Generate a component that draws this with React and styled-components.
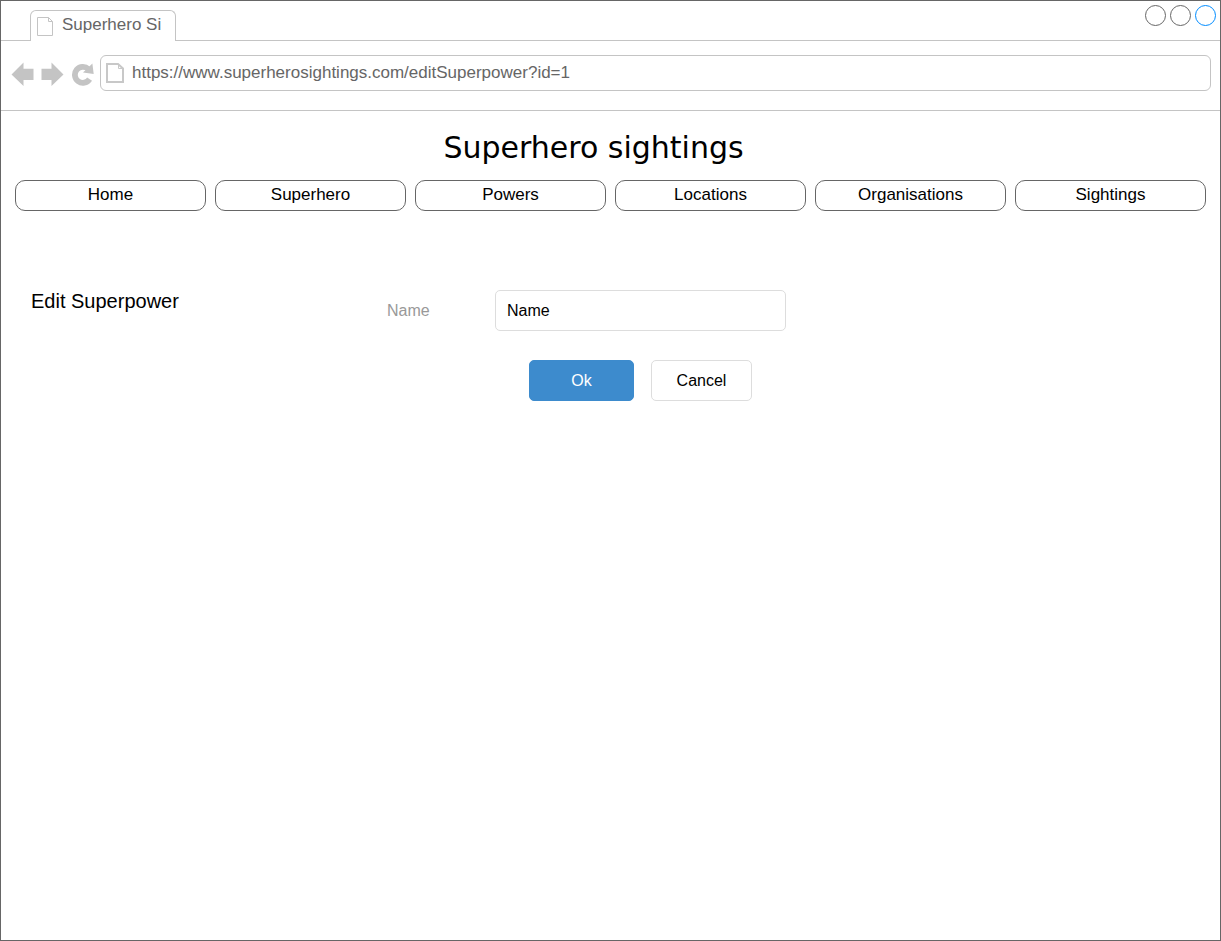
import React from "react";
import styled, { createGlobalStyle } from "styled-components";

const GlobalStyle = createGlobalStyle`
  *, *::before, *::after { box-sizing: border-box; }
  body {
    margin: 0;
    background: #fff;
    color: #000;
    font-family: "Liberation Sans", Arial, sans-serif;
    font-size: 16px;
  }
`;

const Window = styled.div`
  display: flex;
  flex-direction: column;
  min-height: 100vh;
  border: 1px solid #666;
  background: #fff;
`;

const TabStrip = styled.div`
  display: flex;
  justify-content: space-between;
  height: 40px;
  padding: 0 4px 0 29px;
  border-bottom: 1px solid #c4c4c4;
`;

const Tab = styled.div`
  display: flex;
  gap: 9px;
  width: 146px;
  height: 31px;
  margin-top: 9px;
  padding: 5px 6px 0;
  border: 1px solid #c4c4c4;
  border-bottom: 0;
  border-radius: 6px 6px 0 0;
  background: #fff;
  color: #666;
  font-size: 17px;
  line-height: 18px;
  white-space: nowrap;

  svg { margin-top: 1px; }
`;

const WindowControls = styled.div`
  display: flex;
  gap: 4px;
  padding-top: 4px;
`;

const Circle = styled.button`
  width: 21px;
  height: 21px;
  padding: 0;
  border: 1px solid ${(p) => (p.$accent ? "#008cff" : "#666")};
  border-radius: 50%;
  background: #fff;
`;

const Toolbar = styled.div`
  display: flex;
  align-items: flex-start;
  height: 70px;
  padding: 14px 9px 0 10px;
  border-bottom: 1px solid #c4c4c4;
`;

const IconButton = styled.button`
  display: flex;
  align-items: center;
  width: 24px;
  height: 38px;
  margin-right: 6px;
  padding: 0;
  border: 0;
  background: none;

  &:last-of-type { margin-right: 5px; }
`;

const AddressBar = styled.label`
  display: flex;
  flex: 1;
  gap: 8px;
  align-items: center;
  height: 36px;
  padding: 0 5px;
  border: 1px solid #c4c4c4;
  border-radius: 6px;
`;

const AddressInput = styled.input`
  flex: 1;
  min-width: 0;
  height: 20px;
  padding: 0;
  border: 0;
  outline: 0;
  background: none;
  color: #666;
  font-family: inherit;
  font-size: 17px;
`;

const Title = styled.h1`
  margin: 0;
  padding: 19px 34px 0 0;
  font-family: "DejaVu Sans", Verdana, sans-serif;
  font-size: 30px;
  font-weight: 400;
  line-height: 36px;
  text-align: center;
`;

const Nav = styled.nav`
  display: grid;
  grid-template-columns: repeat(6, 1fr);
  gap: 9px;
  padding: 14px 14px 0;
`;

const NavLink = styled.a`
  height: 31px;
  border: 1px solid #666;
  border-radius: 10px;
  color: #000;
  font-size: 17px;
  line-height: 28px;
  text-align: center;
  text-decoration: none;
`;

const Content = styled.main`
  display: flex;
  align-items: flex-start;
  padding: 79px 30px 0;
`;

const Heading = styled.h2`
  width: 356px;
  margin: 0;
  font-size: 20px;
  font-weight: 400;
  line-height: 22px;
`;

const Form = styled.form`
  display: grid;
  grid-template-columns: 108px 291px;
  row-gap: 29px;
  align-items: center;
`;

const Label = styled.label`
  color: #999;
`;

const TextInput = styled.input`
  width: 100%;
  height: 41px;
  padding: 0 11px;
  border: 1px solid #ddd;
  border-radius: 5px;
  background: #fff;
  color: #000;
  font-family: inherit;
  font-size: 16px;
`;

const Actions = styled.div`
  display: flex;
  grid-column: 2;
  gap: 17px;
  justify-content: center;
`;

const Button = styled.button`
  width: ${(p) => (p.$primary ? "105px" : "101px")};
  height: 41px;
  padding: 0;
  border: 1px solid ${(p) => (p.$primary ? "#3d8bcd" : "#ddd")};
  border-radius: 5px;
  background: ${(p) => (p.$primary ? "#3d8bcd" : "#fff")};
  color: ${(p) => (p.$primary ? "#fff" : "#000")};
  font-family: inherit;
  font-size: 16px;
`;

const TabPageIcon = () => (
  <svg width="16" height="19" viewBox="0 0 16 19" fill="none" stroke="#c4c4c4" aria-hidden="true">
    <path d="M0.5 0.5H11.5L15.5 4.5V18.5H0.5Z" />
    <path d="M11.5 0.5V4.5H15.5" />
  </svg>
);

const AddressPageIcon = () => (
  <svg width="18" height="20" viewBox="0 0 18 20" fill="none" stroke="#c8c8c8" aria-hidden="true">
    <path d="M1 1H12L17 5.5V19H1Z" strokeWidth="2" />
    <path d="M12.5 1V5.5H17" />
  </svg>
);

const BackIcon = () => (
  <svg width="24" height="24" viewBox="0 0 24 24" fill="#c4c4c4" aria-hidden="true">
    <path d="M0.5 12.5L12.5 0.5V6.8H22.5V18H12.5V24Z" />
  </svg>
);

const ForwardIcon = () => (
  <svg width="24" height="24" viewBox="0 0 24 24" fill="#c4c4c4" aria-hidden="true">
    <path d="M22.5 12.5L10.5 0.5V6.8H0.5V18H10.5V24Z" />
  </svg>
);

const ReloadIcon = () => (
  <svg width="24" height="24" viewBox="0 0 24 24" aria-hidden="true">
    <path d="M17.4 7A8 8 0 1 0 18.6 17.2" fill="none" stroke="#c4c4c4" strokeWidth="5.8" />
    <path d="M21.4 1.6L22.7 12L12 10.4Z" fill="#c4c4c4" />
  </svg>
);

const links = ["Home", "Superhero", "Powers", "Locations", "Organisations", "Sightings"];

export default function App() {
  return (
    <>
      <GlobalStyle />
      <Window>
        <TabStrip>
          <Tab>
            <TabPageIcon />
            <span>Superhero Si</span>
          </Tab>
          <WindowControls>
            <Circle type="button" aria-label="Minimise" />
            <Circle type="button" aria-label="Maximise" />
            <Circle type="button" aria-label="Close" $accent />
          </WindowControls>
        </TabStrip>
        <Toolbar>
          <IconButton type="button" aria-label="Back"><BackIcon /></IconButton>
          <IconButton type="button" aria-label="Forward"><ForwardIcon /></IconButton>
          <IconButton type="button" aria-label="Reload"><ReloadIcon /></IconButton>
          <AddressBar>
            <AddressPageIcon />
            <AddressInput
              aria-label="Address"
              defaultValue="https://www.superherosightings.com/editSuperpower?id=1"
            />
          </AddressBar>
        </Toolbar>
        <Title>Superhero sightings</Title>
        <Nav>
          {links.map((name) => (
            <NavLink key={name} href="#">{name}</NavLink>
          ))}
        </Nav>
        <Content>
          <Heading>Edit Superpower</Heading>
          <Form onSubmit={(e) => e.preventDefault()}>
            <Label htmlFor="power-name">Name</Label>
            <TextInput id="power-name" defaultValue="Name" />
            <Actions>
              <Button type="submit" $primary>Ok</Button>
              <Button type="button">Cancel</Button>
            </Actions>
          </Form>
        </Content>
      </Window>
    </>
  );
}
